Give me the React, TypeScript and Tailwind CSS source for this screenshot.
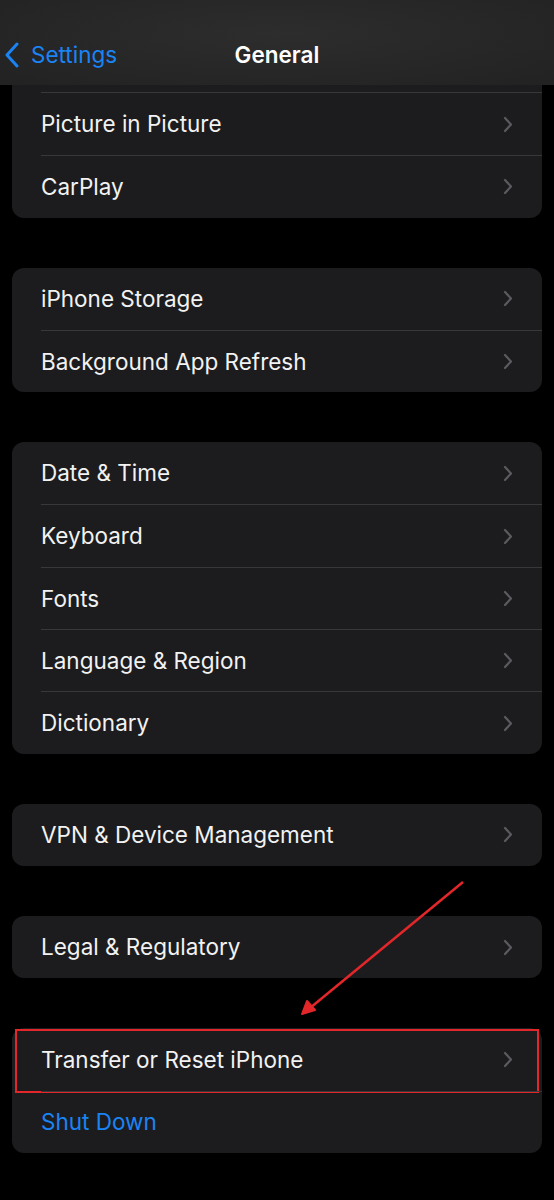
import React from "react";

type Row = { label: string; blue?: boolean; highlight?: boolean };

const groups: Row[][] = [
  [{ label: "iPhone Storage" }, { label: "Background App Refresh" }],
  [
    { label: "Date & Time" },
    { label: "Keyboard" },
    { label: "Fonts" },
    { label: "Language & Region" },
    { label: "Dictionary" },
  ],
  [{ label: "VPN & Device Management" }],
  [{ label: "Legal & Regulatory" }],
  [{ label: "Transfer or Reset iPhone", highlight: true }, { label: "Shut Down", blue: true }],
];

function Chevron() {
  return (
    <svg width="10" height="17" viewBox="0 0 10 17" className="shrink-0">
      <path d="M2 2l6 6.5L2 15" fill="none" stroke="#5b5b5f" strokeWidth="2.2" strokeLinecap="round" strokeLinejoin="round" />
    </svg>
  );
}

function SettingRow({ row, first }: { row: Row; first: boolean }) {
  return (
    <div className="relative pl-[29px]">
      <div
        className={
          "flex h-[62.3px] items-center justify-between pr-[29px] " +
          (first ? "" : "border-t border-[#38383a]")
        }
      >
        <span className={"text-[22.5px] " + (row.blue ? "text-[#1a84f5]" : "text-[#f2f2f2]")}>
          {row.label}
        </span>
        {!row.blue && <Chevron />}
      </div>
      {row.highlight && (
        <div className="absolute left-[3px] right-[3px] top-[1px] bottom-[-2px] border-2 border-[#e3262a]" />
      )}
    </div>
  );
}

export default function App() {
  return (
    <div
      className="relative h-[1200px] w-[554px] overflow-hidden bg-black"
      style={{ fontFamily: "Inter, 'Open Sans', sans-serif" }}
    >
      <header className="relative flex h-[85px] items-end bg-[radial-gradient(ellipse_at_50%_40%,#2d2d2d,#222222)] pb-[13px]">
        <div className="flex items-center pl-[4px] text-[#1a84f5]">
          <svg width="16" height="26" viewBox="0 0 16 26">
            <path d="M13 2L3 13l10 11" fill="none" stroke="#1a84f5" strokeWidth="3" strokeLinecap="round" strokeLinejoin="round" />
          </svg>
          <span className="ml-[11px] text-[22.5px]">Settings</span>
        </div>
        <h1 className="absolute left-0 right-0 bottom-[13px] text-center text-[22.5px] font-semibold text-white">
          General
        </h1>
      </header>

      <div className="mx-[12px] rounded-b-[12px] bg-[#1c1c1e]">
        <div className="h-[7px]" />
        <div className="pl-[29px]">
          <div className="border-t border-[#38383a]" />
        </div>
        <SettingRow row={{ label: "Picture in Picture" }} first />
        <SettingRow row={{ label: "CarPlay" }} first={false} />
      </div>

      <div className="flex flex-col gap-[50px] pt-[50px]">
        {groups.map((g, gi) => (
          <div key={gi} className="mx-[12px] rounded-[12px] bg-[#1c1c1e]">
            {g.map((r, i) => (
              <SettingRow key={r.label} row={r} first={i === 0} />
            ))}
          </div>
        ))}
      </div>

      <svg className="absolute left-0 top-0" width="554" height="1200" viewBox="0 0 554 1200">
        <line x1="463" y1="882" x2="310" y2="1008" stroke="#e3262a" strokeWidth="2.5" />
        <path d="M302 1014l5-13 8 9z" fill="#e3262a" stroke="#e3262a" strokeWidth="2" strokeLinejoin="round" />
      </svg>
    </div>
  );
}
